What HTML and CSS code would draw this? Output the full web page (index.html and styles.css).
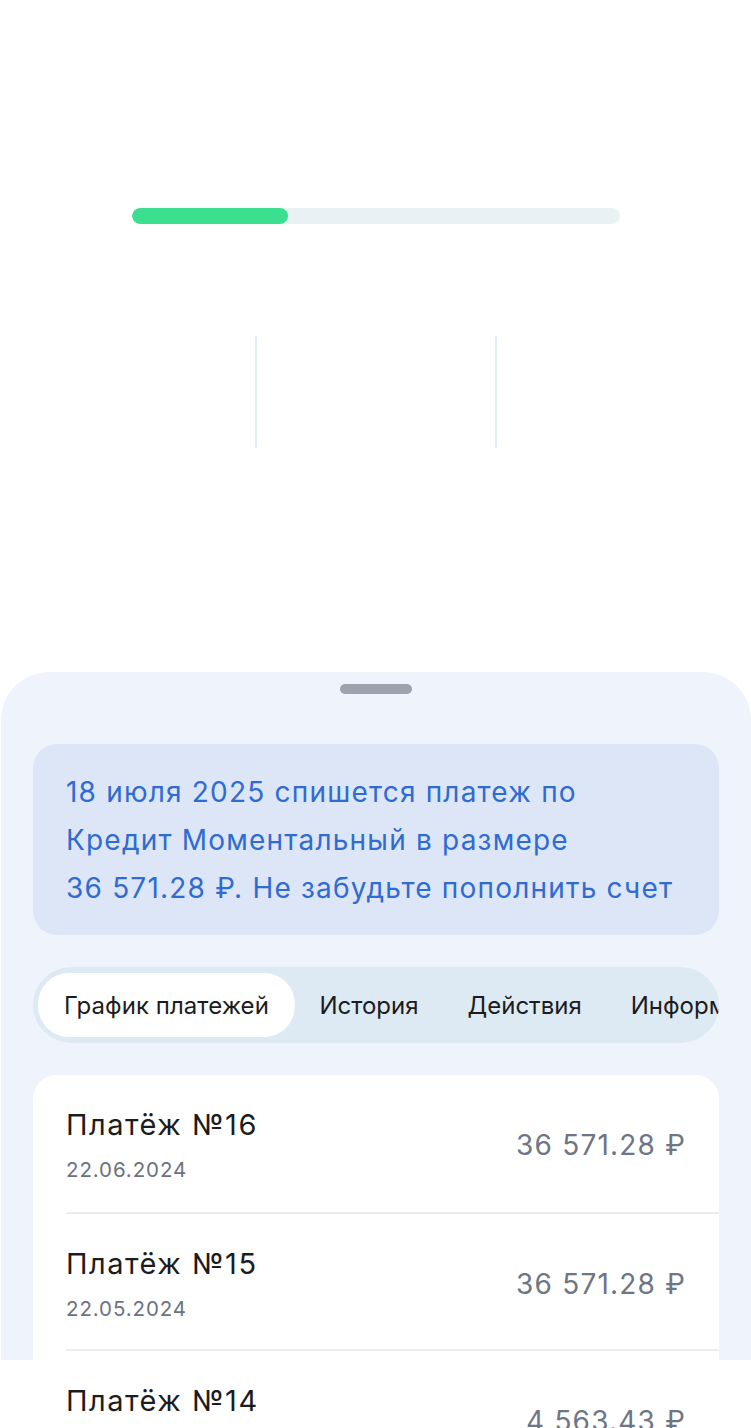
FILE: index.html
```html
<!DOCTYPE html>
<html lang="ru">
<head>
<meta charset="utf-8">
<title>График платежей</title>
<link rel="stylesheet" href="styles.css">
</head>
<body>
<div class="page">
  <section class="top">
    <div class="progress"><div class="progress-fill" style="width:32%"></div></div>
    <div class="stats">
      <div class="stat stat-left"></div>
      <div class="stat stat-mid"></div>
      <div class="stat"></div>
    </div>
  </section>
  <section class="sheet">
    <div class="handle"></div>
    <div class="notice">18 июля 2025 спишется платеж по Кредит Моментальный в размере 36&nbsp;571.28&nbsp;₽. Не забудьте пополнить счет</div>
    <div class="tabs">
      <div class="tab tab-active">График платежей</div>
      <div class="tab">История</div>
      <div class="tab">Действия</div>
      <div class="tab">Информация</div>
    </div>
    <div class="list">
      <div class="row">
        <div class="row-main">
          <div class="row-title">Платёж №16</div>
          <div class="row-date">22.06.2024</div>
        </div>
        <div class="row-amount">36 571.28 ₽</div>
      </div>
      <div class="row">
        <div class="row-main">
          <div class="row-title">Платёж №15</div>
          <div class="row-date">22.05.2024</div>
        </div>
        <div class="row-amount">36 571.28 ₽</div>
      </div>
      <div class="row">
        <div class="row-main">
          <div class="row-title">Платёж №14</div>
          <div class="row-date">22.04.2024</div>
        </div>
        <div class="row-amount">4 563.43 ₽</div>
      </div>
    </div>
  </section>
</div>
</body>
</html>
```

FILE: styles.css
```css
* { box-sizing: border-box; }
html, body {
  margin: 0;
  padding: 0;
  background: #ffffff;
}
body {
  font-family: Inter, "Noto Sans", sans-serif;
  overflow: hidden;
  height: 1428px;
}
.page {
  width: 751px;
}
.top {
  height: 672px;
  padding-top: 208px;
}
.progress {
  width: 488px;
  height: 16px;
  margin: 0 auto;
  background: #EAF1F5;
  border-radius: 8px;
  overflow: hidden;
}
.progress-fill {
  height: 100%;
  background: #3AE08F;
  border-radius: 8px;
}
.stats {
  display: flex;
  padding-left: 14px;
  margin-top: 112px;
}
.stat {
  width: 240px;
  height: 112px;
}
.stat-left {
  width: 241px;
}
.stat-mid {
  width: 242px;
  border-left: 2px solid #E6EDF9;
  border-right: 2px solid #E6EDF9;
}
.sheet {
  height: 688px;
  margin-left: 1px;
  background: #EFF4FC;
  border-radius: 48px 48px 0 0;
  padding: 12px 32px 0 32px;
}
.handle {
  width: 72px;
  height: 10px;
  border-radius: 5px;
  background: #9CA3AF;
  margin: 0 auto;
}
.notice {
  margin-top: 50px;
  background: #DDE6F6;
  border-radius: 24px;
  padding: 24px 33px 23px 33px;
  color: #2F6BD2;
  font-size: 28px;
  line-height: 48px;
  letter-spacing: 1.2px;
}
.tabs {
  margin-top: 32px;
  height: 76px;
  background: #DDE9F3;
  border-radius: 38px;
  padding: 7px 5px;
  display: flex;
  overflow: hidden;
  white-space: nowrap;
}
.tab {
  flex: none;
  height: 62px;
  padding: 0 24.5px;
  display: flex;
  align-items: center;
  font-size: 24px;
  color: #1C1C1E;
  letter-spacing: 0;
  border-radius: 31px;
}
.tab-active {
  background: #ffffff;
  height: 64px;
  margin-top: -1px;
  padding: 0 26px;
  letter-spacing: 0.05px;
}
.list {
  margin-top: 32px;
  background: #ffffff;
  border-radius: 24px;
  padding-left: 33px;
}
.row {
  display: flex;
  align-items: center;
  justify-content: space-between;
  padding: 32px 33px 27px 0;
  border-bottom: 2px solid #ECECEC;
}
.row:first-child {
  padding-bottom: 29px;
}
.row-title {
  font-size: 29px;
  line-height: 36px;
  color: #1C1C1E;
  letter-spacing: 1.5px;
}
.row-date {
  margin-top: 14px;
  font-size: 20.5px;
  line-height: 26px;
  color: #6B7280;
  letter-spacing: 0.9px;
}
.row-amount {
  font-size: 28px;
  line-height: 36px;
  color: #6E7685;
  letter-spacing: 1.2px;
}
```
